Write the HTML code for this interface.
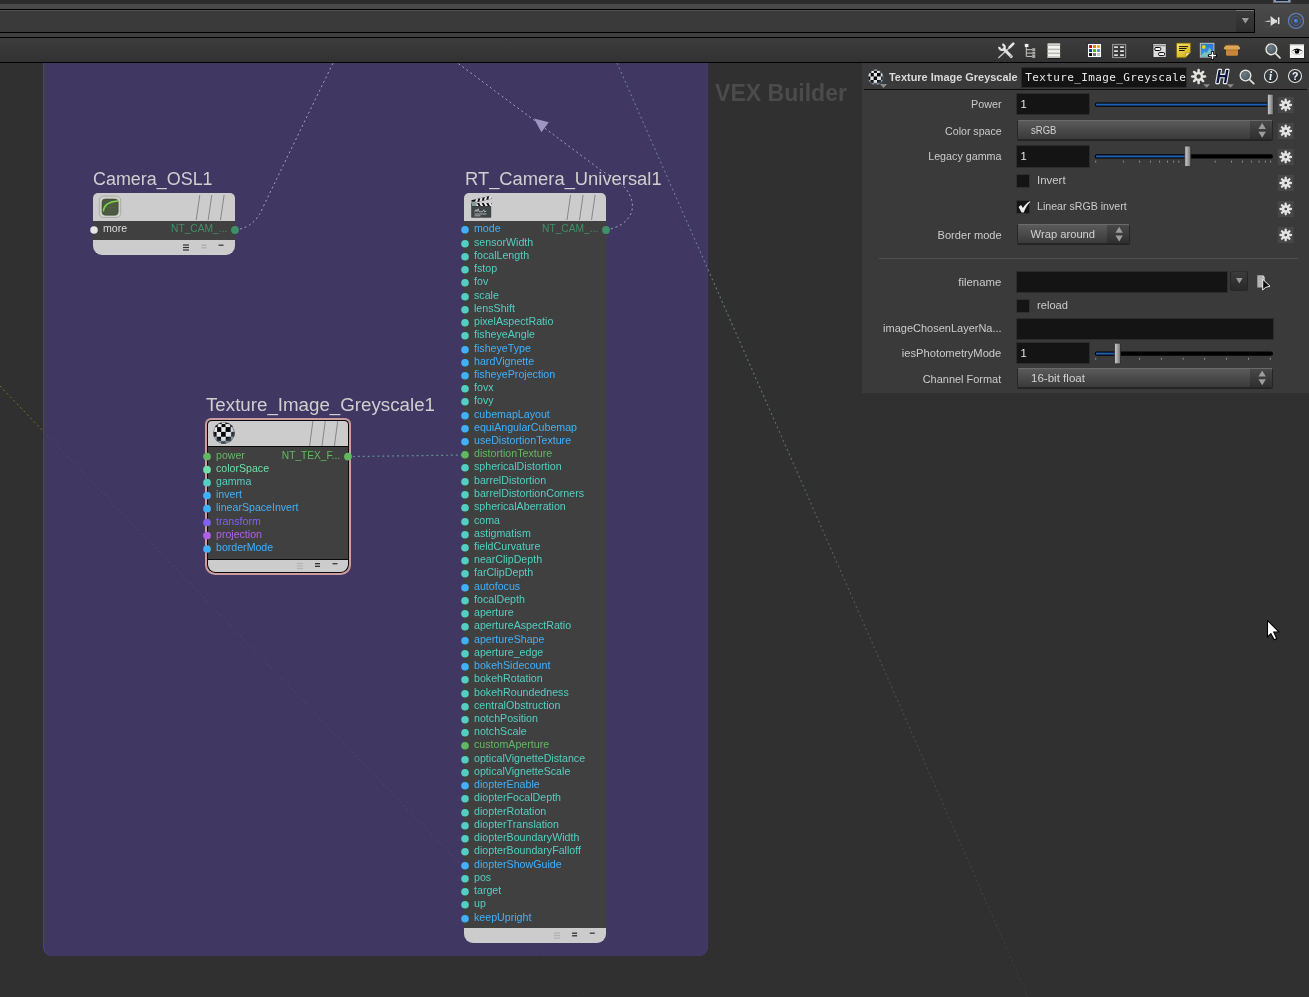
<!DOCTYPE html>
<html><head><meta charset="utf-8"><title>Houdini</title><style>
html,body{margin:0;padding:0}
body{width:1309px;height:997px;position:relative;overflow:hidden;background:#303030;font-family:"Liberation Sans",sans-serif}
.a{position:absolute}
.t{position:absolute;white-space:nowrap;transform-origin:0 50%;line-height:1}
.tr{position:absolute;white-space:nowrap;transform-origin:100% 50%;line-height:1;text-align:right}
svg{position:absolute;left:0;top:0;overflow:visible}
</style></head><body>
<div id="w" style="position:absolute;left:0;top:0;width:1309px;height:997px;will-change:transform">
<div class="a" style="left:0px;top:0px;width:1309px;height:4px;background:#2d2d2d"></div>
<div class="a" style="left:1273.2px;top:0px;width:17.6px;height:2.9px;background:#6c6c6c"></div>
<div class="a" style="left:1274px;top:0px;width:16px;height:2.2px;background:#7f9dc2"></div>
<div class="a" style="left:1276.1px;top:0px;width:11.8px;height:0.9px;background:#1b1f22"></div>
<div class="a" style="left:0px;top:4px;width:1309px;height:33px;background:linear-gradient(#4a4a4a,#3f3f3f)"></div>
<div class="a" style="left:-2px;top:9px;width:1257px;height:24px;background:#3a3a3a;box-sizing:border-box;border:1px solid #000;box-shadow:inset 0 1px 0 #505050"></div>
<div class="a" style="left:1236px;top:10px;width:18px;height:22px;background:linear-gradient(#3a3a3a,#2e2e2e);border-top:1px solid #777;box-sizing:border-box"></div>
<div class="a" style="left:0px;top:37px;width:1309px;height:1px;background:#000"></div>
<div class="a" style="left:0px;top:38px;width:1309px;height:24px;background:linear-gradient(#3d3d3d,#323232)"></div>
<div class="a" style="left:0px;top:62px;width:1309px;height:1px;background:#000"></div>
<div class="a" style="left:43px;top:63px;width:665px;height:893px;background:#403862;border-radius:0 0 9px 9px;box-shadow:inset 1px 0 0 #4a4180, inset -1.5px 0 0 #443a6a"></div>
<div class="a" style="left:862px;top:63px;width:447px;height:330px;background:#3a3a3a"></div>
<div class="t" style="left:715.00px;top:81px;font-size:24.60px;color:#4b4b4b;font-weight:bold;transform:scaleX(0.9375);">VEX Builder</div>
<svg width="1309" height="997" viewBox="0 0 1309 997">
<path d="M235 230 C 250 228, 258 220, 264 205 L 333 63" fill="none" stroke="#a49ec6" stroke-width="1" stroke-dasharray="2 2.9"/>
<path d="M606 230 C 628 226, 636 212, 631 198 C 627 186, 614 178, 602 171 L 457.6 63" fill="none" stroke="#a49ec6" stroke-width="1" stroke-dasharray="2 2.9"/>
<path d="M534 118.6 L548.8 122.2 L541.4 132.2 Z" fill="#9d96c2"/>
<line x1="617" y1="63" x2="708" y2="269.5" stroke="#6c86ac" stroke-width="1" stroke-dasharray="2 2.9"/>
<defs><linearGradient id="fade" gradientUnits="userSpaceOnUse" x1="708" y1="269" x2="1028" y2="997"><stop offset="0" stop-color="#677d74"/><stop offset="0.25" stop-color="#5c6c64"/><stop offset="0.6" stop-color="#484c4a"/><stop offset="1" stop-color="#3a3a3a"/></linearGradient></defs>
<line x1="708" y1="269.5" x2="1028" y2="997" stroke="url(#fade)" stroke-width="1.1" stroke-dasharray="2 2.9"/>
<line x1="348" y1="456.6" x2="465" y2="455" stroke="#5f8f95" stroke-width="1.2" stroke-dasharray="2 2.9"/>
<line x1="0" y1="386" x2="43" y2="431" stroke="#77771f" stroke-width="1" stroke-dasharray="2 2.9"/>
<line x1="43" y1="431" x2="464" y2="868" stroke="#4d4670" stroke-width="1" stroke-dasharray="2 2.9"/>
<line x1="530" y1="942" x2="581" y2="997" stroke="#3a3a3a" stroke-width="1" stroke-dasharray="2 2.9"/>
</svg>
<div class="a" style="left:93px;top:193.4px;width:142px;height:27.8px;background:#cccccc;border-radius:5px 5px 0 0"></div>
<div class="a" style="left:93px;top:221px;width:142px;height:19px;background:#404040"></div>
<div class="a" style="left:93px;top:240px;width:142px;height:14.5px;background:#cccccc;border-radius:0 0 9px 9px"></div>
<div class="t" style="left:93.30px;top:170px;font-size:18.00px;color:#cfcfcf;transform:scaleX(0.9961);">Camera_OSL1</div>
<div class="t" style="left:103.40px;top:224px;font-size:10.40px;color:#dcdcdc;transform:scaleX(1.0250);">more</div>
<div class="t" style="left:170.70px;top:224px;font-size:10.20px;color:#3f9068;transform:scaleX(1.0051);">NT_CAM_...</div>
<div class="a" style="left:464px;top:193.4px;width:142px;height:27.8px;background:#cccccc;border-radius:5px 5px 0 0"></div>
<div class="a" style="left:464px;top:221px;width:142px;height:707px;background:#404040"></div>
<div class="a" style="left:464px;top:928px;width:142px;height:14.5px;background:#cccccc;border-radius:0 0 9px 9px"></div>
<div class="t" style="left:464.70px;top:170px;font-size:18.00px;color:#cfcfcf;transform:scaleX(1.0200);">RT_Camera_Universal1</div>
<div class="t" style="left:474.40px;top:224px;font-size:10.40px;color:#41b0fa;transform:scaleX(1.0250);">mode</div>
<div class="t" style="left:474.40px;top:238px;font-size:10.40px;color:#52cfc0;transform:scaleX(1.0250);">sensorWidth</div>
<div class="t" style="left:474.40px;top:251px;font-size:10.40px;color:#52cfc0;transform:scaleX(1.0250);">focalLength</div>
<div class="t" style="left:474.40px;top:264px;font-size:10.40px;color:#52cfc0;transform:scaleX(1.0250);">fstop</div>
<div class="t" style="left:474.40px;top:277px;font-size:10.40px;color:#52cfc0;transform:scaleX(1.0250);">fov</div>
<div class="t" style="left:474.40px;top:291px;font-size:10.40px;color:#52cfc0;transform:scaleX(1.0250);">scale</div>
<div class="t" style="left:474.40px;top:304px;font-size:10.40px;color:#52cfc0;transform:scaleX(1.0250);">lensShift</div>
<div class="t" style="left:474.40px;top:317px;font-size:10.40px;color:#52cfc0;transform:scaleX(1.0250);">pixelAspectRatio</div>
<div class="t" style="left:474.40px;top:330px;font-size:10.40px;color:#52cfc0;transform:scaleX(1.0250);">fisheyeAngle</div>
<div class="t" style="left:474.40px;top:344px;font-size:10.40px;color:#41b0fa;transform:scaleX(1.0250);">fisheyeType</div>
<div class="t" style="left:474.40px;top:357px;font-size:10.40px;color:#41b0fa;transform:scaleX(1.0250);">hardVignette</div>
<div class="t" style="left:474.40px;top:370px;font-size:10.40px;color:#41b0fa;transform:scaleX(1.0250);">fisheyeProjection</div>
<div class="t" style="left:474.40px;top:383px;font-size:10.40px;color:#52cfc0;transform:scaleX(1.0250);">fovx</div>
<div class="t" style="left:474.40px;top:396px;font-size:10.40px;color:#52cfc0;transform:scaleX(1.0250);">fovy</div>
<div class="t" style="left:474.40px;top:410px;font-size:10.40px;color:#41b0fa;transform:scaleX(1.0250);">cubemapLayout</div>
<div class="t" style="left:474.40px;top:423px;font-size:10.40px;color:#41b0fa;transform:scaleX(1.0250);">equiAngularCubemap</div>
<div class="t" style="left:474.40px;top:436px;font-size:10.40px;color:#41b0fa;transform:scaleX(1.0250);">useDistortionTexture</div>
<div class="t" style="left:474.40px;top:449px;font-size:10.40px;color:#62b860;transform:scaleX(1.0250);">distortionTexture</div>
<div class="t" style="left:474.40px;top:462px;font-size:10.40px;color:#52cfc0;transform:scaleX(1.0250);">sphericalDistortion</div>
<div class="t" style="left:474.40px;top:476px;font-size:10.40px;color:#52cfc0;transform:scaleX(1.0250);">barrelDistortion</div>
<div class="t" style="left:474.40px;top:489px;font-size:10.40px;color:#52cfc0;transform:scaleX(1.0250);">barrelDistortionCorners</div>
<div class="t" style="left:474.40px;top:502px;font-size:10.40px;color:#52cfc0;transform:scaleX(1.0250);">sphericalAberration</div>
<div class="t" style="left:474.40px;top:516px;font-size:10.40px;color:#52cfc0;transform:scaleX(1.0250);">coma</div>
<div class="t" style="left:474.40px;top:529px;font-size:10.40px;color:#52cfc0;transform:scaleX(1.0250);">astigmatism</div>
<div class="t" style="left:474.40px;top:542px;font-size:10.40px;color:#52cfc0;transform:scaleX(1.0250);">fieldCurvature</div>
<div class="t" style="left:474.40px;top:555px;font-size:10.40px;color:#52cfc0;transform:scaleX(1.0250);">nearClipDepth</div>
<div class="t" style="left:474.40px;top:568px;font-size:10.40px;color:#52cfc0;transform:scaleX(1.0250);">farClipDepth</div>
<div class="t" style="left:474.40px;top:582px;font-size:10.40px;color:#41b0fa;transform:scaleX(1.0250);">autofocus</div>
<div class="t" style="left:474.40px;top:595px;font-size:10.40px;color:#52cfc0;transform:scaleX(1.0250);">focalDepth</div>
<div class="t" style="left:474.40px;top:608px;font-size:10.40px;color:#52cfc0;transform:scaleX(1.0250);">aperture</div>
<div class="t" style="left:474.40px;top:621px;font-size:10.40px;color:#52cfc0;transform:scaleX(1.0250);">apertureAspectRatio</div>
<div class="t" style="left:474.40px;top:635px;font-size:10.40px;color:#41b0fa;transform:scaleX(1.0250);">apertureShape</div>
<div class="t" style="left:474.40px;top:648px;font-size:10.40px;color:#52cfc0;transform:scaleX(1.0250);">aperture_edge</div>
<div class="t" style="left:474.40px;top:661px;font-size:10.40px;color:#41b0fa;transform:scaleX(1.0250);">bokehSidecount</div>
<div class="t" style="left:474.40px;top:674px;font-size:10.40px;color:#52cfc0;transform:scaleX(1.0250);">bokehRotation</div>
<div class="t" style="left:474.40px;top:688px;font-size:10.40px;color:#52cfc0;transform:scaleX(1.0250);">bokehRoundedness</div>
<div class="t" style="left:474.40px;top:701px;font-size:10.40px;color:#52cfc0;transform:scaleX(1.0250);">centralObstruction</div>
<div class="t" style="left:474.40px;top:714px;font-size:10.40px;color:#52cfc0;transform:scaleX(1.0250);">notchPosition</div>
<div class="t" style="left:474.40px;top:727px;font-size:10.40px;color:#52cfc0;transform:scaleX(1.0250);">notchScale</div>
<div class="t" style="left:474.40px;top:740px;font-size:10.40px;color:#62b860;transform:scaleX(1.0250);">customAperture</div>
<div class="t" style="left:474.40px;top:754px;font-size:10.40px;color:#52cfc0;transform:scaleX(1.0250);">opticalVignetteDistance</div>
<div class="t" style="left:474.40px;top:767px;font-size:10.40px;color:#52cfc0;transform:scaleX(1.0250);">opticalVignetteScale</div>
<div class="t" style="left:474.40px;top:780px;font-size:10.40px;color:#41b0fa;transform:scaleX(1.0250);">diopterEnable</div>
<div class="t" style="left:474.40px;top:793px;font-size:10.40px;color:#52cfc0;transform:scaleX(1.0250);">diopterFocalDepth</div>
<div class="t" style="left:474.40px;top:807px;font-size:10.40px;color:#52cfc0;transform:scaleX(1.0250);">diopterRotation</div>
<div class="t" style="left:474.40px;top:820px;font-size:10.40px;color:#52cfc0;transform:scaleX(1.0250);">diopterTranslation</div>
<div class="t" style="left:474.40px;top:833px;font-size:10.40px;color:#52cfc0;transform:scaleX(1.0250);">diopterBoundaryWidth</div>
<div class="t" style="left:474.40px;top:846px;font-size:10.40px;color:#52cfc0;transform:scaleX(1.0250);">diopterBoundaryFalloff</div>
<div class="t" style="left:474.40px;top:860px;font-size:10.40px;color:#41b0fa;transform:scaleX(1.0250);">diopterShowGuide</div>
<div class="t" style="left:474.40px;top:873px;font-size:10.40px;color:#52cfc0;transform:scaleX(1.0250);">pos</div>
<div class="t" style="left:474.40px;top:886px;font-size:10.40px;color:#52cfc0;transform:scaleX(1.0250);">target</div>
<div class="t" style="left:474.40px;top:899px;font-size:10.40px;color:#52cfc0;transform:scaleX(1.0250);">up</div>
<div class="t" style="left:474.40px;top:913px;font-size:10.40px;color:#41b0fa;transform:scaleX(1.0250);">keepUpright</div>
<div class="t" style="left:541.60px;top:224px;font-size:10.20px;color:#3f9068;transform:scaleX(1.0051);">NT_CAM_...</div>
<div class="a" style="left:204.7px;top:417.8px;width:146.2px;height:157.3px;background:#cd9c9e;border-radius:6px 6px 10px 10px"></div>
<div class="a" style="left:206.9px;top:419.8px;width:142.1px;height:153px;background:#0a0a0a;border-radius:4.5px 4.5px 8.5px 8.5px"></div>
<div class="a" style="left:207.8px;top:420.7px;width:140.4px;height:25.3px;background:#cccccc;border-radius:4px 4px 0 0"></div>
<div class="a" style="left:207.8px;top:447px;width:140.4px;height:111.9px;background:#404040"></div>
<div class="a" style="left:207.8px;top:559.7px;width:140.4px;height:12.4px;background:#cccccc;border-radius:0 0 7.5px 7.5px"></div>
<div class="t" style="left:206.30px;top:396px;font-size:18.00px;color:#cfcfcf;transform:scaleX(1.0403);">Texture_Image_Greyscale1</div>
<div class="t" style="left:216.00px;top:451px;font-size:10.40px;color:#62b860;transform:scaleX(1.0200);">power</div>
<div class="t" style="left:216.00px;top:464px;font-size:10.40px;color:#6ee0a8;transform:scaleX(1.0200);">colorSpace</div>
<div class="t" style="left:216.00px;top:477px;font-size:10.40px;color:#52cfc0;transform:scaleX(1.0200);">gamma</div>
<div class="t" style="left:216.00px;top:490px;font-size:10.40px;color:#41b0fa;transform:scaleX(1.0200);">invert</div>
<div class="t" style="left:216.00px;top:503px;font-size:10.40px;color:#41b0fa;transform:scaleX(1.0200);">linearSpaceInvert</div>
<div class="t" style="left:216.00px;top:517px;font-size:10.40px;color:#8060f0;transform:scaleX(1.0200);">transform</div>
<div class="t" style="left:216.00px;top:530px;font-size:10.40px;color:#b060e8;transform:scaleX(1.0200);">projection</div>
<div class="t" style="left:216.00px;top:543px;font-size:10.40px;color:#41b0fa;transform:scaleX(1.0200);">borderMode</div>
<div class="t" style="left:281.80px;top:451px;font-size:10.20px;color:#62b860;">NT_TEX_F...</div>
<div class="t" style="left:889.20px;top:72px;font-size:11.00px;color:#dadada;font-weight:bold;transform:scaleX(0.9936);">Texture Image Greyscale</div>
<div class="a" style="left:1021.3px;top:66.8px;width:165.6px;height:21.6px;background:#131313;box-sizing:border-box;border:1.5px solid #2b2b2b"></div>
<div class="a" style="left:1022.6px;top:68px;width:164.2px;height:19.2px;overflow:hidden"><div class="t" style="left:2.7px;top:4px;font-family:'DejaVu Sans Mono','Liberation Mono',monospace;font-size:11px;letter-spacing:0.378px;line-height:1;color:#e8e8e8">Texture_Image_Greyscale1</div></div>
<div class="a" style="left:864px;top:89px;width:443px;height:1px;background:#0c0c0c"></div>
<div class="tr" style="right:307.70px;top:99px;font-size:11.20px;color:#cbcbcb;transform:scaleX(0.9670);">Power</div>
<div class="a" style="left:1016.2px;top:93.4px;width:74px;height:22.1px;background:#141414;box-sizing:border-box;border:1.5px solid #2c2c2c"></div>
<div class="t" style="left:1020.60px;top:99px;font-size:11.20px;color:#e6e6e6;">1</div>
<div class="tr" style="right:307.70px;top:126px;font-size:11.20px;color:#cbcbcb;transform:scaleX(0.9487);">Color space</div>
<div class="a" style="left:1016.6px;top:120px;width:256px;height:20.4px;background:linear-gradient(#5a5a5a,#3a3a3a);box-sizing:border-box;border:1px solid #262626;border-top-color:#6a6a6a;border-radius:2px;box-shadow:0 1px 0 #222"></div>
<div class="a" style="left:1250.1px;top:121px;width:21.5px;height:18.4px;background:linear-gradient(#484848,#2f2f2f);border-radius:0 2px 2px 0"></div>
<div class="t" style="left:1030.60px;top:125px;font-size:11.20px;color:#d2d2d2;transform:scaleX(0.8503);">sRGB</div>
<div class="tr" style="right:307.70px;top:151px;font-size:11.20px;color:#cbcbcb;transform:scaleX(0.9585);">Legacy gamma</div>
<div class="a" style="left:1016.2px;top:145.4px;width:74px;height:22.2px;background:#141414;box-sizing:border-box;border:1.5px solid #2c2c2c"></div>
<div class="t" style="left:1020.60px;top:151px;font-size:11.20px;color:#e6e6e6;">1</div>
<div class="a" style="left:1016px;top:174px;width:14px;height:14px;background:#141414;box-sizing:border-box;border:1.5px solid #303030"></div>
<div class="t" style="left:1037.30px;top:175px;font-size:11.20px;color:#cbcbcb;transform:scaleX(1.0210);">Invert</div>
<div class="a" style="left:1016px;top:200.2px;width:14px;height:14px;background:#141414;box-sizing:border-box;border:1.5px solid #303030"></div>
<div class="t" style="left:1037.30px;top:201px;font-size:11.20px;color:#cbcbcb;transform:scaleX(0.9491);">Linear sRGB invert</div>
<div class="tr" style="right:307.70px;top:230px;font-size:11.20px;color:#cbcbcb;transform:scaleX(0.9915);">Border mode</div>
<div class="a" style="left:1016.6px;top:223.8px;width:113px;height:20.6px;background:linear-gradient(#5a5a5a,#3a3a3a);box-sizing:border-box;border:1px solid #262626;border-top-color:#6a6a6a;border-radius:2px;box-shadow:0 1px 0 #222"></div>
<div class="a" style="left:1107.1px;top:224.8px;width:21.5px;height:18.6px;background:linear-gradient(#484848,#2f2f2f);border-radius:0 2px 2px 0"></div>
<div class="t" style="left:1030.60px;top:229px;font-size:11.20px;color:#d2d2d2;">Wrap around</div>
<div class="a" style="left:879px;top:258px;width:419px;height:1px;background:#515151"></div>
<div class="tr" style="right:307.70px;top:277px;font-size:11.20px;color:#cbcbcb;transform:scaleX(1.0157);">filename</div>
<div class="a" style="left:1016.2px;top:271.3px;width:211.8px;height:22.2px;background:#141414;box-sizing:border-box;border:1.5px solid #2c2c2c"></div>
<div class="a" style="left:1229.6px;top:271.1px;width:18px;height:19.8px;background:linear-gradient(#3b3b3b,#292929);box-sizing:border-box;border:1px solid #262626;border-top-color:#303030;border-radius:2.5px"></div>
<div class="a" style="left:1016px;top:299.2px;width:14px;height:14px;background:#141414;box-sizing:border-box;border:1.5px solid #303030"></div>
<div class="t" style="left:1037.30px;top:300px;font-size:11.20px;color:#cbcbcb;transform:scaleX(0.9957);">reload</div>
<div class="tr" style="right:307.70px;top:323px;font-size:11.20px;color:#cbcbcb;transform:scaleX(0.9828);">imageChosenLayerNa...</div>
<div class="a" style="left:1016.2px;top:317.6px;width:257.8px;height:22.2px;background:#141414;box-sizing:border-box;border:1.5px solid #2c2c2c"></div>
<div class="tr" style="right:307.70px;top:348px;font-size:11.20px;color:#cbcbcb;">iesPhotometryMode</div>
<div class="a" style="left:1016.2px;top:342.3px;width:74px;height:22px;background:#141414;box-sizing:border-box;border:1.5px solid #2c2c2c"></div>
<div class="t" style="left:1020.60px;top:348px;font-size:11.20px;color:#e6e6e6;">1</div>
<div class="tr" style="right:307.70px;top:374px;font-size:11.20px;color:#cbcbcb;transform:scaleX(0.9788);">Channel Format</div>
<div class="a" style="left:1016.6px;top:367.6px;width:256px;height:20.5px;background:linear-gradient(#5a5a5a,#3a3a3a);box-sizing:border-box;border:1px solid #262626;border-top-color:#6a6a6a;border-radius:2px;box-shadow:0 1px 0 #222"></div>
<div class="a" style="left:1250.1px;top:368.6px;width:21.5px;height:18.5px;background:linear-gradient(#484848,#2f2f2f);border-radius:0 2px 2px 0"></div>
<div class="t" style="left:1030.60px;top:373px;font-size:11.20px;color:#d2d2d2;transform:scaleX(1.0325);">16-bit float</div>
<svg width="1309" height="997" viewBox="0 0 1309 997">
<defs><linearGradient id="hg" x1="0" x2="1" y1="0" y2="0"><stop offset="0" stop-color="#cfcfcf"/><stop offset="0.45" stop-color="#a8a8a8"/><stop offset="1" stop-color="#6e6e6e"/></linearGradient></defs>
<rect x="1094.80" y="102.40" width="178.20" height="4.4" rx="2.2" fill="#000"/>
<rect x="1096.00" y="103.60" width="175.00" height="2" fill="#1f5fb4"/>
<rect x="1267.40" y="94.20" width="6" height="20.6" rx="0.8" fill="url(#hg)" stroke="#2a2a2a" stroke-width="0.8"/>
<rect x="1277.70" y="97.00" width="16" height="16" fill="#474747"/>
<line x1="1288.30" y1="105.00" x2="1291.00" y2="105.00" stroke="#e4e4e4" stroke-width="2.3" stroke-linecap="round"/>
<line x1="1287.54" y1="106.84" x2="1289.45" y2="108.75" stroke="#e4e4e4" stroke-width="2.3" stroke-linecap="round"/>
<line x1="1285.70" y1="107.60" x2="1285.70" y2="110.30" stroke="#e4e4e4" stroke-width="2.3" stroke-linecap="round"/>
<line x1="1283.86" y1="106.84" x2="1281.95" y2="108.75" stroke="#e4e4e4" stroke-width="2.3" stroke-linecap="round"/>
<line x1="1283.10" y1="105.00" x2="1280.40" y2="105.00" stroke="#e4e4e4" stroke-width="2.3" stroke-linecap="round"/>
<line x1="1283.86" y1="103.16" x2="1281.95" y2="101.25" stroke="#e4e4e4" stroke-width="2.3" stroke-linecap="round"/>
<line x1="1285.70" y1="102.40" x2="1285.70" y2="99.70" stroke="#e4e4e4" stroke-width="2.3" stroke-linecap="round"/>
<line x1="1287.54" y1="103.16" x2="1289.45" y2="101.25" stroke="#e4e4e4" stroke-width="2.3" stroke-linecap="round"/>
<circle cx="1285.70" cy="105.00" r="2.60" fill="none" stroke="#e4e4e4" stroke-width="2.2"/>
<path d="M1258.45 128.90 l3.7 -6 l3.7 6 z M1258.45 131.70 l3.7 6 l3.7 -6 z" fill="#9c9c9c"/>
<rect x="1277.70" y="123.00" width="16" height="16" fill="#474747"/>
<line x1="1288.30" y1="131.00" x2="1291.00" y2="131.00" stroke="#e4e4e4" stroke-width="2.3" stroke-linecap="round"/>
<line x1="1287.54" y1="132.84" x2="1289.45" y2="134.75" stroke="#e4e4e4" stroke-width="2.3" stroke-linecap="round"/>
<line x1="1285.70" y1="133.60" x2="1285.70" y2="136.30" stroke="#e4e4e4" stroke-width="2.3" stroke-linecap="round"/>
<line x1="1283.86" y1="132.84" x2="1281.95" y2="134.75" stroke="#e4e4e4" stroke-width="2.3" stroke-linecap="round"/>
<line x1="1283.10" y1="131.00" x2="1280.40" y2="131.00" stroke="#e4e4e4" stroke-width="2.3" stroke-linecap="round"/>
<line x1="1283.86" y1="129.16" x2="1281.95" y2="127.25" stroke="#e4e4e4" stroke-width="2.3" stroke-linecap="round"/>
<line x1="1285.70" y1="128.40" x2="1285.70" y2="125.70" stroke="#e4e4e4" stroke-width="2.3" stroke-linecap="round"/>
<line x1="1287.54" y1="129.16" x2="1289.45" y2="127.25" stroke="#e4e4e4" stroke-width="2.3" stroke-linecap="round"/>
<circle cx="1285.70" cy="131.00" r="2.60" fill="none" stroke="#e4e4e4" stroke-width="2.2"/>
<rect x="1094.80" y="154.20" width="178.20" height="4.4" rx="2.2" fill="#000"/>
<rect x="1096.00" y="155.40" width="92.40" height="2" fill="#1f5fb4"/>
<rect x="1095.20" y="160.60" width="1" height="2" fill="#8a8a8a"/>
<rect x="1122.90" y="160.60" width="1" height="2" fill="#8a8a8a"/>
<rect x="1139.00" y="160.60" width="1" height="2" fill="#8a8a8a"/>
<rect x="1150.00" y="160.60" width="1" height="2" fill="#8a8a8a"/>
<rect x="1159.10" y="160.60" width="1" height="2" fill="#8a8a8a"/>
<rect x="1167.00" y="160.60" width="1" height="2" fill="#8a8a8a"/>
<rect x="1173.10" y="160.60" width="1" height="2" fill="#8a8a8a"/>
<rect x="1178.30" y="160.60" width="1" height="2" fill="#8a8a8a"/>
<rect x="1214.70" y="160.60" width="1" height="2" fill="#8a8a8a"/>
<rect x="1231.00" y="160.60" width="1" height="2" fill="#8a8a8a"/>
<rect x="1242.00" y="160.60" width="1" height="2" fill="#8a8a8a"/>
<rect x="1250.90" y="160.60" width="1" height="2" fill="#8a8a8a"/>
<rect x="1258.60" y="160.60" width="1" height="2" fill="#8a8a8a"/>
<rect x="1264.90" y="160.60" width="1" height="2" fill="#8a8a8a"/>
<rect x="1270.20" y="160.60" width="1" height="2" fill="#8a8a8a"/>
<rect x="1184.80" y="146.00" width="6" height="20.6" rx="0.8" fill="url(#hg)" stroke="#2a2a2a" stroke-width="0.8"/>
<rect x="1277.70" y="149.00" width="16" height="16" fill="#474747"/>
<line x1="1288.30" y1="157.00" x2="1291.00" y2="157.00" stroke="#e4e4e4" stroke-width="2.3" stroke-linecap="round"/>
<line x1="1287.54" y1="158.84" x2="1289.45" y2="160.75" stroke="#e4e4e4" stroke-width="2.3" stroke-linecap="round"/>
<line x1="1285.70" y1="159.60" x2="1285.70" y2="162.30" stroke="#e4e4e4" stroke-width="2.3" stroke-linecap="round"/>
<line x1="1283.86" y1="158.84" x2="1281.95" y2="160.75" stroke="#e4e4e4" stroke-width="2.3" stroke-linecap="round"/>
<line x1="1283.10" y1="157.00" x2="1280.40" y2="157.00" stroke="#e4e4e4" stroke-width="2.3" stroke-linecap="round"/>
<line x1="1283.86" y1="155.16" x2="1281.95" y2="153.25" stroke="#e4e4e4" stroke-width="2.3" stroke-linecap="round"/>
<line x1="1285.70" y1="154.40" x2="1285.70" y2="151.70" stroke="#e4e4e4" stroke-width="2.3" stroke-linecap="round"/>
<line x1="1287.54" y1="155.16" x2="1289.45" y2="153.25" stroke="#e4e4e4" stroke-width="2.3" stroke-linecap="round"/>
<circle cx="1285.70" cy="157.00" r="2.60" fill="none" stroke="#e4e4e4" stroke-width="2.2"/>
<rect x="1277.70" y="175.00" width="16" height="16" fill="#474747"/>
<line x1="1288.30" y1="183.00" x2="1291.00" y2="183.00" stroke="#e4e4e4" stroke-width="2.3" stroke-linecap="round"/>
<line x1="1287.54" y1="184.84" x2="1289.45" y2="186.75" stroke="#e4e4e4" stroke-width="2.3" stroke-linecap="round"/>
<line x1="1285.70" y1="185.60" x2="1285.70" y2="188.30" stroke="#e4e4e4" stroke-width="2.3" stroke-linecap="round"/>
<line x1="1283.86" y1="184.84" x2="1281.95" y2="186.75" stroke="#e4e4e4" stroke-width="2.3" stroke-linecap="round"/>
<line x1="1283.10" y1="183.00" x2="1280.40" y2="183.00" stroke="#e4e4e4" stroke-width="2.3" stroke-linecap="round"/>
<line x1="1283.86" y1="181.16" x2="1281.95" y2="179.25" stroke="#e4e4e4" stroke-width="2.3" stroke-linecap="round"/>
<line x1="1285.70" y1="180.40" x2="1285.70" y2="177.70" stroke="#e4e4e4" stroke-width="2.3" stroke-linecap="round"/>
<line x1="1287.54" y1="181.16" x2="1289.45" y2="179.25" stroke="#e4e4e4" stroke-width="2.3" stroke-linecap="round"/>
<circle cx="1285.70" cy="183.00" r="2.60" fill="none" stroke="#e4e4e4" stroke-width="2.2"/>
<path transform="translate(0 200.20)" d="M1018.6 6.9 L1021 4.9 L1022.9 7.9 C1024.6 4.9 1026.9 2.7 1029.8 1.1 L1030.2 1.8 C1027.2 4.8 1025 8.4 1023.8 12.4 L1021.6 12.4 Z" fill="#ececec"/>
<rect x="1277.70" y="201.00" width="16" height="16" fill="#474747"/>
<line x1="1288.30" y1="209.00" x2="1291.00" y2="209.00" stroke="#e4e4e4" stroke-width="2.3" stroke-linecap="round"/>
<line x1="1287.54" y1="210.84" x2="1289.45" y2="212.75" stroke="#e4e4e4" stroke-width="2.3" stroke-linecap="round"/>
<line x1="1285.70" y1="211.60" x2="1285.70" y2="214.30" stroke="#e4e4e4" stroke-width="2.3" stroke-linecap="round"/>
<line x1="1283.86" y1="210.84" x2="1281.95" y2="212.75" stroke="#e4e4e4" stroke-width="2.3" stroke-linecap="round"/>
<line x1="1283.10" y1="209.00" x2="1280.40" y2="209.00" stroke="#e4e4e4" stroke-width="2.3" stroke-linecap="round"/>
<line x1="1283.86" y1="207.16" x2="1281.95" y2="205.25" stroke="#e4e4e4" stroke-width="2.3" stroke-linecap="round"/>
<line x1="1285.70" y1="206.40" x2="1285.70" y2="203.70" stroke="#e4e4e4" stroke-width="2.3" stroke-linecap="round"/>
<line x1="1287.54" y1="207.16" x2="1289.45" y2="205.25" stroke="#e4e4e4" stroke-width="2.3" stroke-linecap="round"/>
<circle cx="1285.70" cy="209.00" r="2.60" fill="none" stroke="#e4e4e4" stroke-width="2.2"/>
<path d="M1115.45 232.80 l3.7 -6 l3.7 6 z M1115.45 235.60 l3.7 6 l3.7 -6 z" fill="#9c9c9c"/>
<rect x="1277.70" y="227.00" width="16" height="16" fill="#474747"/>
<line x1="1288.30" y1="235.00" x2="1291.00" y2="235.00" stroke="#e4e4e4" stroke-width="2.3" stroke-linecap="round"/>
<line x1="1287.54" y1="236.84" x2="1289.45" y2="238.75" stroke="#e4e4e4" stroke-width="2.3" stroke-linecap="round"/>
<line x1="1285.70" y1="237.60" x2="1285.70" y2="240.30" stroke="#e4e4e4" stroke-width="2.3" stroke-linecap="round"/>
<line x1="1283.86" y1="236.84" x2="1281.95" y2="238.75" stroke="#e4e4e4" stroke-width="2.3" stroke-linecap="round"/>
<line x1="1283.10" y1="235.00" x2="1280.40" y2="235.00" stroke="#e4e4e4" stroke-width="2.3" stroke-linecap="round"/>
<line x1="1283.86" y1="233.16" x2="1281.95" y2="231.25" stroke="#e4e4e4" stroke-width="2.3" stroke-linecap="round"/>
<line x1="1285.70" y1="232.40" x2="1285.70" y2="229.70" stroke="#e4e4e4" stroke-width="2.3" stroke-linecap="round"/>
<line x1="1287.54" y1="233.16" x2="1289.45" y2="231.25" stroke="#e4e4e4" stroke-width="2.3" stroke-linecap="round"/>
<circle cx="1285.70" cy="235.00" r="2.60" fill="none" stroke="#e4e4e4" stroke-width="2.2"/>
<path d="M1236 278 h6.6 l-3.3 5.4 z" fill="#9a9a9a"/>
<path d="M1257.3 275.2 h5.6 l2 2.2 v10.2 h-7.6 z" fill="#b4b4b4"/>
<path d="M1262.9 275.2 v2.2 h2 z" fill="#e8e8e8"/>
<path d="M1262.7 279.2 L1262.7 290 L1265.4 287.5 L1270 286.2 Z" fill="#0a0a0a" stroke="#f2f2f2" stroke-width="1" stroke-linejoin="round"/>
<rect x="1094.80" y="351.40" width="178.20" height="4.4" rx="2.2" fill="#000"/>
<rect x="1096.00" y="352.60" width="22.10" height="2" fill="#1f5fb4"/>
<rect x="1095.20" y="357.80" width="1" height="2" fill="#8a8a8a"/>
<rect x="1139.00" y="357.80" width="1" height="2" fill="#8a8a8a"/>
<rect x="1160.90" y="357.80" width="1" height="2" fill="#8a8a8a"/>
<rect x="1182.70" y="357.80" width="1" height="2" fill="#8a8a8a"/>
<rect x="1204.10" y="357.80" width="1" height="2" fill="#8a8a8a"/>
<rect x="1226.10" y="357.80" width="1" height="2" fill="#8a8a8a"/>
<rect x="1248.00" y="357.80" width="1" height="2" fill="#8a8a8a"/>
<rect x="1269.80" y="357.80" width="1" height="2" fill="#8a8a8a"/>
<rect x="1114.50" y="343.20" width="6" height="20.6" rx="0.8" fill="url(#hg)" stroke="#2a2a2a" stroke-width="0.8"/>
<path d="M1258.45 376.55 l3.7 -6 l3.7 6 z M1258.45 379.35 l3.7 6 l3.7 -6 z" fill="#9c9c9c"/>
</svg>
<!--ICONSVG-->
<svg width="1309" height="997" viewBox="0 0 1309 997">
<circle cx="94" cy="230" r="3.75" fill="#e6e6e6"/>
<circle cx="235" cy="230" r="3.9" fill="#3f9068"/>
<line x1="196.20" y1="220.00" x2="199.80" y2="195.00" stroke="#868686" stroke-width="1"/>
<line x1="208.20" y1="220.00" x2="211.80" y2="195.00" stroke="#868686" stroke-width="1"/>
<line x1="220.50" y1="220.00" x2="224.10" y2="195.00" stroke="#868686" stroke-width="1"/>
<rect x="183.00" y="244.40" width="6" height="1.2" fill="#333"/>
<rect x="183.00" y="246.90" width="6" height="1.2" fill="#333"/>
<rect x="183.00" y="249.40" width="6" height="1.2" fill="#333"/>
<rect x="201.50" y="244.60" width="5" height="1.2" fill="#aaa"/>
<rect x="201.50" y="247.20" width="5" height="1.2" fill="#aaa"/>
<rect x="218.50" y="244.50" width="5" height="1.4" fill="#444"/>
<circle cx="465.00" cy="229.75" r="3.8" fill="#41b0fa"/>
<circle cx="465.00" cy="243.75" r="3.8" fill="#52cfc0"/>
<circle cx="465.00" cy="256.75" r="3.8" fill="#52cfc0"/>
<circle cx="465.00" cy="269.75" r="3.8" fill="#52cfc0"/>
<circle cx="465.00" cy="282.75" r="3.8" fill="#52cfc0"/>
<circle cx="465.00" cy="296.75" r="3.8" fill="#52cfc0"/>
<circle cx="465.00" cy="309.75" r="3.8" fill="#52cfc0"/>
<circle cx="465.00" cy="322.75" r="3.8" fill="#52cfc0"/>
<circle cx="465.00" cy="335.75" r="3.8" fill="#52cfc0"/>
<circle cx="465.00" cy="349.75" r="3.8" fill="#41b0fa"/>
<circle cx="465.00" cy="362.75" r="3.8" fill="#41b0fa"/>
<circle cx="465.00" cy="375.75" r="3.8" fill="#41b0fa"/>
<circle cx="465.00" cy="388.75" r="3.8" fill="#52cfc0"/>
<circle cx="465.00" cy="401.75" r="3.8" fill="#52cfc0"/>
<circle cx="465.00" cy="415.75" r="3.8" fill="#41b0fa"/>
<circle cx="465.00" cy="428.75" r="3.8" fill="#41b0fa"/>
<circle cx="465.00" cy="441.75" r="3.8" fill="#41b0fa"/>
<circle cx="465.00" cy="454.75" r="3.8" fill="#62b860"/>
<circle cx="465.00" cy="467.75" r="3.8" fill="#52cfc0"/>
<circle cx="465.00" cy="481.75" r="3.8" fill="#52cfc0"/>
<circle cx="465.00" cy="494.75" r="3.8" fill="#52cfc0"/>
<circle cx="465.00" cy="507.75" r="3.8" fill="#52cfc0"/>
<circle cx="465.00" cy="521.75" r="3.8" fill="#52cfc0"/>
<circle cx="465.00" cy="534.75" r="3.8" fill="#52cfc0"/>
<circle cx="465.00" cy="547.75" r="3.8" fill="#52cfc0"/>
<circle cx="465.00" cy="560.75" r="3.8" fill="#52cfc0"/>
<circle cx="465.00" cy="573.75" r="3.8" fill="#52cfc0"/>
<circle cx="465.00" cy="587.75" r="3.8" fill="#41b0fa"/>
<circle cx="465.00" cy="600.75" r="3.8" fill="#52cfc0"/>
<circle cx="465.00" cy="613.75" r="3.8" fill="#52cfc0"/>
<circle cx="465.00" cy="626.75" r="3.8" fill="#52cfc0"/>
<circle cx="465.00" cy="640.75" r="3.8" fill="#41b0fa"/>
<circle cx="465.00" cy="653.75" r="3.8" fill="#52cfc0"/>
<circle cx="465.00" cy="666.75" r="3.8" fill="#41b0fa"/>
<circle cx="465.00" cy="679.75" r="3.8" fill="#52cfc0"/>
<circle cx="465.00" cy="693.75" r="3.8" fill="#52cfc0"/>
<circle cx="465.00" cy="706.75" r="3.8" fill="#52cfc0"/>
<circle cx="465.00" cy="719.75" r="3.8" fill="#52cfc0"/>
<circle cx="465.00" cy="732.75" r="3.8" fill="#52cfc0"/>
<circle cx="465.00" cy="745.75" r="3.8" fill="#62b860"/>
<circle cx="465.00" cy="759.75" r="3.8" fill="#52cfc0"/>
<circle cx="465.00" cy="772.75" r="3.8" fill="#52cfc0"/>
<circle cx="465.00" cy="785.75" r="3.8" fill="#41b0fa"/>
<circle cx="465.00" cy="798.75" r="3.8" fill="#52cfc0"/>
<circle cx="465.00" cy="812.75" r="3.8" fill="#52cfc0"/>
<circle cx="465.00" cy="825.75" r="3.8" fill="#52cfc0"/>
<circle cx="465.00" cy="838.75" r="3.8" fill="#52cfc0"/>
<circle cx="465.00" cy="851.75" r="3.8" fill="#52cfc0"/>
<circle cx="465.00" cy="865.75" r="3.8" fill="#41b0fa"/>
<circle cx="465.00" cy="878.75" r="3.8" fill="#52cfc0"/>
<circle cx="465.00" cy="891.75" r="3.8" fill="#52cfc0"/>
<circle cx="465.00" cy="904.75" r="3.8" fill="#52cfc0"/>
<circle cx="465.00" cy="918.75" r="3.8" fill="#41b0fa"/>
<circle cx="606" cy="230" r="3.9" fill="#3f9068"/>
<line x1="567.00" y1="220.00" x2="570.60" y2="195.00" stroke="#868686" stroke-width="1"/>
<line x1="579.50" y1="220.00" x2="583.10" y2="195.00" stroke="#868686" stroke-width="1"/>
<line x1="591.50" y1="220.00" x2="595.10" y2="195.00" stroke="#868686" stroke-width="1"/>
<rect x="554.00" y="932.40" width="6" height="1.2" fill="#b0b0b0"/>
<rect x="554.00" y="934.90" width="6" height="1.2" fill="#b0b0b0"/>
<rect x="554.00" y="937.40" width="6" height="1.2" fill="#b0b0b0"/>
<rect x="572.10" y="932.60" width="5" height="1.2" fill="#222"/>
<rect x="572.10" y="935.20" width="5" height="1.2" fill="#222"/>
<rect x="589.80" y="932.50" width="5" height="1.4" fill="#444"/>
<circle cx="207" cy="456.60" r="3.85" fill="#62b860"/>
<circle cx="207" cy="469.70" r="3.85" fill="#6ee0a8"/>
<circle cx="207" cy="482.70" r="3.85" fill="#52cfc0"/>
<circle cx="207" cy="495.60" r="3.85" fill="#41b0fa"/>
<circle cx="207" cy="508.70" r="3.85" fill="#41b0fa"/>
<circle cx="207" cy="522.50" r="3.85" fill="#8060f0"/>
<circle cx="207" cy="535.60" r="3.85" fill="#b060e8"/>
<circle cx="207" cy="549.00" r="3.85" fill="#41b0fa"/>
<circle cx="348" cy="456.6" r="3.9" fill="#62b860"/>
<line x1="309.60" y1="446.00" x2="312.90" y2="421.00" stroke="#868686" stroke-width="1"/>
<line x1="322.00" y1="446.00" x2="325.30" y2="421.00" stroke="#868686" stroke-width="1"/>
<line x1="334.40" y1="446.00" x2="337.70" y2="421.00" stroke="#868686" stroke-width="1"/>
<rect x="296.80" y="562.90" width="6" height="1.2" fill="#b4b4b4"/>
<rect x="296.80" y="565.40" width="6" height="1.2" fill="#b4b4b4"/>
<rect x="296.80" y="567.90" width="6" height="1.2" fill="#b4b4b4"/>
<rect x="315.00" y="563.10" width="5" height="1.2" fill="#222"/>
<rect x="315.00" y="565.70" width="5" height="1.2" fill="#222"/>
<rect x="332.50" y="563.00" width="5" height="1.4" fill="#444"/>
</svg>
<svg width="1309" height="997" viewBox="0 0 1309 997">
<defs><radialGradient id="sph" cx="0.45" cy="0.4" r="0.62"><stop offset="0.55" stop-color="#8090a0" stop-opacity="0"/><stop offset="1" stop-color="#607080" stop-opacity="0.75"/></radialGradient><linearGradient id="note" x1="0" x2="0.6" y1="0" y2="1"><stop offset="0" stop-color="#f7e468"/><stop offset="1" stop-color="#d6b41e"/></linearGradient><linearGradient id="imgb" x1="0" x2="0" y1="0" y2="1"><stop offset="0" stop-color="#2a74d4"/><stop offset="1" stop-color="#3f98e4"/></linearGradient><radialGradient id="lens" cx="0.4" cy="0.35" r="0.7"><stop offset="0" stop-color="#6d7d86"/><stop offset="1" stop-color="#46525a"/></radialGradient><radialGradient id="ball" cx="0.4" cy="0.35" r="0.7"><stop offset="0" stop-color="#3d464c"/><stop offset="1" stop-color="#1c2226"/></radialGradient><linearGradient id="hfill" x1="0" x2="0" y1="0" y2="1"><stop offset="0" stop-color="#0a1c4c"/><stop offset="0.6" stop-color="#0c2a66"/><stop offset="1" stop-color="#050a20"/></linearGradient></defs>
<clipPath id="csa"><circle cx="223.90" cy="433.00" r="10.80"/></clipPath>
<g clip-path="url(#csa)">
<circle cx="223.90" cy="433.00" r="10.80" fill="#e4e8ea"/>
<rect x="218.08" y="422.20" width="3.62" height="1.84" fill="#050505"/>
<rect x="225.41" y="422.20" width="4.40" height="1.84" fill="#050505"/>
<rect x="214.96" y="424.04" width="2.75" height="3.02" fill="#050505"/>
<rect x="221.55" y="424.04" width="3.94" height="3.02" fill="#050505"/>
<rect x="230.16" y="424.04" width="3.11" height="3.02" fill="#050505"/>
<rect x="217.10" y="427.06" width="4.21" height="4.86" fill="#050505"/>
<rect x="225.62" y="427.06" width="5.11" height="4.86" fill="#050505"/>
<rect x="213.32" y="431.92" width="3.24" height="4.86" fill="#050505"/>
<rect x="221.09" y="431.92" width="4.64" height="4.86" fill="#050505"/>
<rect x="231.24" y="431.92" width="3.67" height="4.86" fill="#050505"/>
<rect x="216.56" y="436.78" width="4.54" height="4.54" fill="#050505"/>
<rect x="225.74" y="436.78" width="5.51" height="4.54" fill="#050505"/>
<rect x="213.32" y="441.32" width="3.24" height="2.48" fill="#050505"/>
<rect x="221.09" y="441.32" width="4.64" height="2.48" fill="#050505"/>
<rect x="231.24" y="441.32" width="3.67" height="2.48" fill="#050505"/>
<circle cx="223.90" cy="433.00" r="10.80" fill="url(#sph)"/>
</g>
<circle cx="223.90" cy="433.00" r="10.50" fill="none" stroke="#4a525a" stroke-opacity="0.6" stroke-width="0.8"/>
<clipPath id="csb"><circle cx="875.70" cy="77.25" r="7.90"/></clipPath>
<g clip-path="url(#csb)">
<circle cx="875.70" cy="77.25" r="7.90" fill="#e4e8ea"/>
<rect x="871.44" y="69.35" width="2.65" height="1.34" fill="#050505"/>
<rect x="876.80" y="69.35" width="3.22" height="1.34" fill="#050505"/>
<rect x="869.16" y="70.69" width="2.01" height="2.21" fill="#050505"/>
<rect x="873.98" y="70.69" width="2.88" height="2.21" fill="#050505"/>
<rect x="880.28" y="70.69" width="2.28" height="2.21" fill="#050505"/>
<rect x="870.72" y="72.91" width="3.08" height="3.55" fill="#050505"/>
<rect x="876.96" y="72.91" width="3.74" height="3.55" fill="#050505"/>
<rect x="867.96" y="76.46" width="2.37" height="3.56" fill="#050505"/>
<rect x="873.65" y="76.46" width="3.40" height="3.56" fill="#050505"/>
<rect x="881.07" y="76.46" width="2.69" height="3.56" fill="#050505"/>
<rect x="870.33" y="80.02" width="3.32" height="3.32" fill="#050505"/>
<rect x="877.04" y="80.02" width="4.03" height="3.32" fill="#050505"/>
<rect x="867.96" y="83.33" width="2.37" height="1.82" fill="#050505"/>
<rect x="873.65" y="83.33" width="3.40" height="1.82" fill="#050505"/>
<rect x="881.07" y="83.33" width="2.69" height="1.82" fill="#050505"/>
<circle cx="875.70" cy="77.25" r="7.90" fill="url(#sph)"/>
</g>
<circle cx="875.70" cy="77.25" r="7.60" fill="none" stroke="#4a525a" stroke-opacity="0.6" stroke-width="0.8"/>
<rect x="99.3" y="196.1" width="21.4" height="21.4" rx="4.2" fill="#cfd2cb" stroke="#a3a89f" stroke-width="0.9"/>
<rect x="102" y="199" width="16.2" height="16.2" rx="3.4" fill="#4b5a40" stroke="#39452f" stroke-width="0.6"/>
<path d="M103.3 210.8 C 104 205.4, 108 201.6, 117.6 200.9" fill="none" stroke="#7fd24a" stroke-width="1.5" stroke-linecap="round"/>
<path d="M106 207.2 h9 M110.2 207.2 v6" fill="none" stroke="#62734f" stroke-width="0.7" stroke-dasharray="1.2 1"/>
<rect x="471.2" y="205.6" width="20" height="12.2" rx="0.8" fill="#3d4547"/>
<rect x="471.2" y="203" width="20.4" height="3.1" fill="#111"/>
<path d="M474.60 203 h2.4 l1.6 3.1 h-2.4 z" fill="#e8e8e8"/>
<path d="M479.20 203 h2.4 l1.6 3.1 h-2.4 z" fill="#e8e8e8"/>
<path d="M483.80 203 h2.4 l1.6 3.1 h-2.4 z" fill="#e8e8e8"/>
<path d="M488.40 203 h2.4 l1.6 3.1 h-2.4 z" fill="#e8e8e8"/>
<g transform="rotate(-13 472 203.3)"><rect x="472" y="200.2" width="20" height="3.1" fill="#111"/><path d="M475.00 203.3 h2.4 l1.6 -3.1 h-2.4 z" fill="#e8e8e8"/><path d="M479.60 203.3 h2.4 l1.6 -3.1 h-2.4 z" fill="#e8e8e8"/><path d="M484.20 203.3 h2.4 l1.6 -3.1 h-2.4 z" fill="#e8e8e8"/><path d="M488.80 203.3 h2.4 l1.6 -3.1 h-2.4 z" fill="#e8e8e8"/></g>
<rect x="471.6" y="201.6" width="5" height="4.4" fill="#8c9a9e"/>
<path d="M474.5 212.2 l1.5 -2.6 l1 2 l1.2 -2.8 l1 3 h3.2 l1.4 -2 l1 2.4 l1.4 -1.4 M474.5 214 h12 M474.5 215.8 h6" fill="none" stroke="#c4c8c8" stroke-width="0.8"/>
<path d="M1264 21.3 L1270.2 20.5 L1270.2 22.1 Z" fill="#e8e8e8"/>
<path d="M1270.2 15.2 L1275.4 19.4 L1277.4 19.4 L1277.4 23.2 L1275.4 23.2 L1270.2 26.6 Z" fill="#dcdcdc" stroke="#2a2a2a" stroke-width="0.6"/>
<rect x="1277.4" y="16.9" width="2.5" height="7.8" fill="#e6e6e6" stroke="#2a2a2a" stroke-width="0.6"/>
<path d="M1265 26.8 h14" stroke="#555" stroke-width="0.8" opacity="0.6"/>
<circle cx="1296" cy="20.9" r="7.5" fill="none" stroke="#5b7db0" stroke-width="1.4"/>
<circle cx="1296" cy="20.9" r="4.6" fill="none" stroke="#4a6592" stroke-width="1"/>
<circle cx="1296" cy="20.9" r="2.2" fill="#3a70c6"/>
<circle cx="1295.5" cy="20.3" r="0.9" fill="#6aa0ec"/>
<path d="M1241.8 18 h7.2 l-3.6 5.4 z" fill="#9a9a9a"/>
<path d="M1009.2 48 L998.6 57.7" fill="none" stroke="#c9c9c9" stroke-width="1.2" stroke-linecap="round"/>
<path d="M1013.3 43.7 L1009.6 47.4" fill="none" stroke="#e6e6e6" stroke-width="2.6" stroke-linecap="round"/>
<path d="M1004 49.2 L1011.2 56.5" fill="none" stroke="#dedede" stroke-width="3.1" stroke-linecap="round"/>
<path d="M1002.28 44.51 A2.7 2.7 0 1 1 999.32 46.87" fill="none" stroke="#e4e4e4" stroke-width="2.3"/>
<circle cx="1010.9" cy="56.1" r="0.8" fill="#8a8a8a"/>
<rect x="1024.8" y="43.9" width="3.6" height="3.1" fill="#f0f0f0"/>
<path d="M1026.3 47 V56.4 H1032 M1026.3 49.7 H1032 M1026.3 53.1 H1032" fill="none" stroke="#c8c8c4" stroke-width="1"/>
<rect x="1032.2" y="48.2" width="3" height="2.9" fill="#a9ada5"/>
<rect x="1032.2" y="51.7" width="3" height="2.9" fill="#a9ada5"/>
<rect x="1032.2" y="55.0" width="3" height="2.9" fill="#a9ada5"/>
<rect x="1048.2" y="44" width="12.8" height="14.6" fill="#111"/>
<rect x="1047.6" y="43.4" width="12.6" height="14.6" fill="#f4f4f0"/>
<rect x="1047.6" y="44.4" width="12.6" height="1.6" fill="#b9bdb1"/>
<rect x="1047.6" y="48.6" width="12.6" height="1.6" fill="#b9bdb1"/>
<rect x="1047.6" y="52.5" width="12.6" height="1.6" fill="#b9bdb1"/>
<rect x="1047.6" y="56.3" width="12.6" height="1.6" fill="#b9bdb1"/>
<rect x="1087.5" y="43.5" width="14.1" height="14.1" fill="#fff" stroke="#1c252b" stroke-width="0.8"/>
<rect x="1089.10" y="45.10" width="2.9" height="2.9" fill="#c00000"/>
<rect x="1093.05" y="45.10" width="2.9" height="2.9" fill="#f07800"/>
<rect x="1097.00" y="45.10" width="2.9" height="2.9" fill="#e0c000"/>
<rect x="1089.10" y="49.10" width="2.9" height="2.9" fill="#103880"/>
<rect x="1093.05" y="49.10" width="2.9" height="2.9" fill="#48b800"/>
<rect x="1097.00" y="49.10" width="2.9" height="2.9" fill="#5890c8"/>
<rect x="1089.10" y="53.10" width="2.9" height="2.9" fill="#000"/>
<rect x="1093.05" y="53.10" width="2.9" height="2.9" fill="#707068"/>
<rect x="1097.00" y="53.10" width="2.9" height="2.9" fill="#c0c4b8"/>
<rect x="1112.6" y="44.5" width="13" height="13" fill="none" stroke="#8e8e8e" stroke-width="1.2"/>
<rect x="1114.10" y="46.30" width="3.8" height="1.7" fill="#e0e0e0"/>
<rect x="1120.10" y="46.30" width="3.8" height="1.7" fill="#e0e0e0"/>
<rect x="1114.10" y="50.30" width="3.8" height="1.7" fill="#e0e0e0"/>
<rect x="1120.10" y="50.30" width="3.8" height="1.7" fill="#e0e0e0"/>
<rect x="1114.10" y="54.30" width="3.8" height="1.7" fill="#e0e0e0"/>
<rect x="1120.10" y="54.30" width="3.8" height="1.7" fill="#e0e0e0"/>
<rect x="1153" y="43.7" width="13.2" height="13.8" fill="#dcdcdc" stroke="#1e2428" stroke-width="0.8"/>
<rect x="1153.4" y="44.1" width="12.4" height="1.4" fill="#c4c4c4"/><rect x="1153.4" y="45.5" width="12.4" height="0.7" fill="#555"/>
<rect x="1154.8" y="47.5" width="6" height="3" rx="1.2" fill="#fff" stroke="#000" stroke-width="1"/>
<rect x="1158.6" y="52.6" width="6" height="3" rx="1.2" fill="#fff" stroke="#000" stroke-width="1"/>
<path d="M1176.4 43.1 H1190.7 V52 L1185.2 57.8 H1176.4 Z" fill="url(#note)" stroke="#6a5a12" stroke-width="0.8"/>
<path d="M1190.7 52 L1185.2 57.8 C1186.2 55.6 1186 54.2 1185.4 53 C1187 53.4 1189 53 1190.7 52 Z" fill="#f9f2a8" stroke="#8a7718" stroke-width="0.5"/>
<path d="M1179 46.6 H1188 M1179 48.5 H1186.5 M1179 50.5 H1184.7" stroke="#15130a" stroke-width="1"/>
<rect x="1200.3" y="43.3" width="13.6" height="13.8" fill="url(#imgb)" stroke="#c9c9c9" stroke-width="0.9"/>
<circle cx="1203.8" cy="47" r="1.9" fill="#e8d21e"/>
<path d="M1201 56.4 V55.4 L1204.8 51.4 L1206.6 53 L1209.6 47.6 L1213.2 53.4 V56.4 Z" fill="#74c2b8"/>
<path d="M1212.5 52.4 V58.6 M1209.4 55.5 H1215.6" stroke="#000" stroke-width="3.2" stroke-linecap="round"/>
<path d="M1212.5 52.6 V58.4 M1209.6 55.5 H1215.4" stroke="#fff" stroke-width="1.5" stroke-linecap="round"/>
<path d="M1226 48.8 H1238 V54.4 Q1238 55.8 1236.6 55.8 H1227.4 Q1226 55.8 1226 54.4 Z" fill="#c8873a"/>
<path d="M1227.2 44.4 H1236.8 L1238.4 46 H1225.6 Z" fill="#7a4c18"/>
<path d="M1225.6 45.6 H1238.4 L1240.2 48 Q1240.4 49.4 1238.8 49.4 H1225.2 Q1223.6 49.4 1223.8 48 Z" fill="#dba55a"/>
<path d="M1226 50.2 H1238" stroke="#a86c26" stroke-width="0.8"/>
<path d="M1275.79 53.69 L1280.00 57.80" stroke="#e4e4de" stroke-width="1.7" stroke-linecap="round"/>
<circle cx="1271.40" cy="49.30" r="5.40" fill="url(#lens)" stroke="#e6e6e0" stroke-width="1.4"/>
<rect x="1290.5" y="44.6" width="14.2" height="14" fill="#111"/>
<rect x="1289.9" y="44" width="14.2" height="14" fill="#f6f6f4"/>
<rect x="1289.9" y="44" width="14.2" height="1.3" fill="#b4b4ac"/>
<path d="M1291.2 51.4 Q1297 45.4 1303.2 51.6 Q1297 48.4 1291.2 51.4 Z" fill="#111"/>
<path d="M1291.6 52 Q1297 57.2 1302.8 52.4" fill="none" stroke="#b8b8b8" stroke-width="0.8"/>
<circle cx="1297" cy="51.5" r="2.3" fill="#000"/>
<circle cx="1296.2" cy="50.6" r="0.6" fill="#ddd"/>
<line x1="1202.35" y1="76.50" x2="1205.00" y2="76.50" stroke="#e6e6e0" stroke-width="2.5" stroke-linecap="round"/>
<line x1="1201.25" y1="79.15" x2="1203.13" y2="81.03" stroke="#e6e6e0" stroke-width="2.5" stroke-linecap="round"/>
<line x1="1198.60" y1="80.25" x2="1198.60" y2="82.90" stroke="#e6e6e0" stroke-width="2.5" stroke-linecap="round"/>
<line x1="1195.95" y1="79.15" x2="1194.07" y2="81.03" stroke="#e6e6e0" stroke-width="2.5" stroke-linecap="round"/>
<line x1="1194.85" y1="76.50" x2="1192.20" y2="76.50" stroke="#e6e6e0" stroke-width="2.5" stroke-linecap="round"/>
<line x1="1195.95" y1="73.85" x2="1194.07" y2="71.97" stroke="#e6e6e0" stroke-width="2.5" stroke-linecap="round"/>
<line x1="1198.60" y1="72.75" x2="1198.60" y2="70.10" stroke="#e6e6e0" stroke-width="2.5" stroke-linecap="round"/>
<line x1="1201.25" y1="73.85" x2="1203.13" y2="71.97" stroke="#e6e6e0" stroke-width="2.5" stroke-linecap="round"/>
<circle cx="1198.60" cy="76.50" r="3.38" fill="none" stroke="#e6e6e0" stroke-width="2.3"/>
<path d="M879.90 84.00 H887.10 L883.50 88.00 Z" fill="#8c8c8c"/>
<path d="M1203.30 84.20 H1210.00 L1206.65 87.80 Z" fill="#8c8c8c"/>
<path d="M1227.00 84.20 H1234.00 L1230.50 87.80 Z" fill="#8c8c8c"/>
<text x="1215.9" y="83" font-family="Liberation Sans, sans-serif" font-weight="bold" font-style="italic" font-size="18" fill="#07163e" stroke="#e9e9e9" stroke-width="2.3" stroke-linejoin="round" paint-order="stroke" textLength="12.2" lengthAdjust="spacingAndGlyphs">H</text>
<path d="M1249.82 79.92 L1253.80 83.70" stroke="#e4e4de" stroke-width="1.7" stroke-linecap="round"/>
<circle cx="1245.50" cy="75.60" r="5.30" fill="url(#lens)" stroke="#e6e6e0" stroke-width="1.4"/>
<circle cx="1270.90" cy="76" r="6.5" fill="url(#ball)" stroke="#e4e4e0" stroke-width="1.1"/>
<text x="1269.00" y="80.2" font-family="Liberation Serif, serif" font-weight="bold" font-style="italic" font-size="11.5" fill="#f4f4f4">i</text>
<circle cx="1295.00" cy="76" r="6.5" fill="url(#ball)" stroke="#e4e4e0" stroke-width="1.1"/>
<text x="1292.00" y="80" font-family="Liberation Sans, sans-serif" font-weight="bold" font-size="10.6" fill="#f4f4f4">?</text>
<path d="M1267.5 620.5 V637 L1270.9 633.7 L1274.2 639.7 L1276.7 638.6 L1273.7 632 L1278.7 631.7 Z" fill="#fff" stroke="#000" stroke-width="1.1" stroke-linejoin="miter"/>
</svg>
</div>
</body></html>
